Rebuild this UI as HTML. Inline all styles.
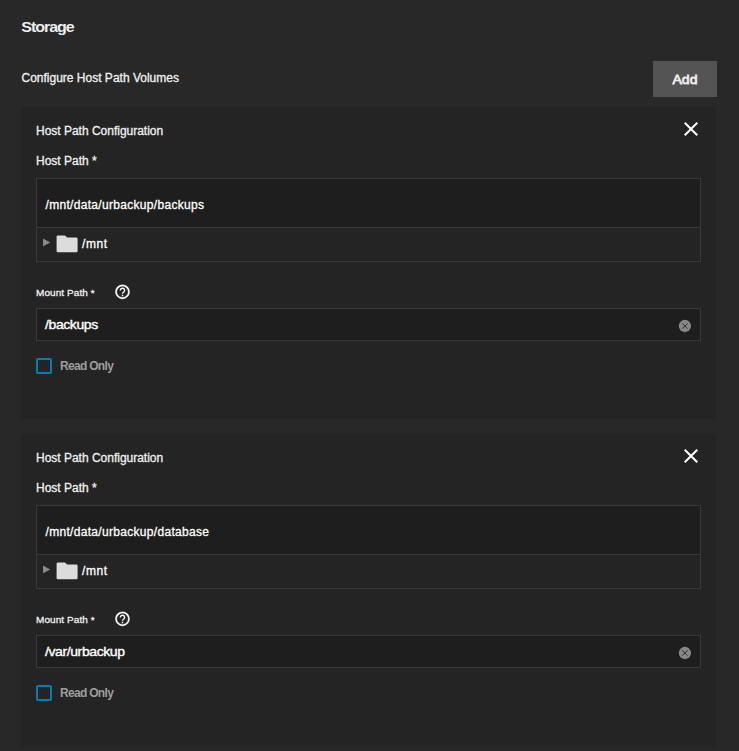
<!DOCTYPE html>
<html lang="en">
<head>
<meta charset="utf-8">
<title>Storage</title>
<style>
  html, body { margin: 0; padding: 0; }
  body {
    width: 739px; height: 751px; overflow: hidden; position: relative;
    background: #282828; color: #ffffff;
    font-family: "Liberation Sans", Arial, sans-serif;
    font-size: 13px;
  }
  .abs { position: absolute; white-space: nowrap; line-height: 1; }
  h2.section-title {
    margin: 0; left: 21px; top: 19px; font-size: 16px; font-weight: 700;
    letter-spacing: -1.02px; color: #ededed; transform: translate(0.3px, 0.3px) scaleY(0.965); transform-origin: 0 78%;
  }
  .list-label { left: 21.5px; top: 72px; font-size: 12px; letter-spacing: 0; color: #f0f0f0; -webkit-text-stroke: 0.3px #f0f0f0; }
  button.add {
    position: absolute; left: 653px; top: 61px; width: 64px; height: 36px;
    border: 0; border-radius: 0; background: #545454; color: #efefef; padding: 0;
    font-family: inherit; font-size: 14px; font-weight: 400; letter-spacing: 0;
    line-height: 36px; text-align: center; -webkit-text-stroke: 0.8px #efefef;
  }
  button.add span { display: inline-block; transform: translateY(0px) scale(1, 0.97); }
  .card {
    position: absolute; left: 21px; width: 695px; height: 312px; background: #242424;
  }
  .card .title { left: 15px; top: 18px; font-size: 12px; letter-spacing: -0.01px; color: #f0f0f0; -webkit-text-stroke: 0.3px #f0f0f0; }
  .card .close { position: absolute; left: 658px; top: 10px; width: 24px; height: 24px; }
  .card .lbl-host { left: 15px; top: 48px; font-size: 12px; letter-spacing: 0; color: #f0f0f0; -webkit-text-stroke: 0.3px #f0f0f0; }
  .explorer {
    position: absolute; left: 15px; top: 71px; width: 663px; height: 82px;
    border: 1px solid #393939;
  }
  .explorer .inp {
    position: absolute; left: 0; top: 0; right: 0; height: 48px; background: #1e1e1e;
    border-bottom: 1px solid #393939;
  }
  .explorer .inp span { left: 8.5px; top: 20px; font-size: 12px; letter-spacing: 0.31px; -webkit-text-stroke: 0.3px #fff; }
  .explorer .tree { position: absolute; left: 0; top: 49px; right: 0; height: 33px; }
  .tree svg { position: absolute; left: 0; top: 0; width: 48px; height: 33px; }
  .tree span { left: 45px; top: 10px; font-size: 12px; letter-spacing: 0.6px; -webkit-text-stroke: 0.3px #fff; }
  .lbl-mount { left: 15px; top: 181px; font-size: 10px; color: #f0f0f0; -webkit-text-stroke: 0.3px #f0f0f0; letter-spacing: 0.08px; transform: scaleY(0.985); transform-origin: 0 80%; }
  .help { position: absolute; left: 93px; top: 176px; width: 18px; height: 18px; }
  .field {
    position: absolute; left: 15px; top: 201px; width: 663px; height: 31px;
    border: 1px solid #393939; background: #1e1e1e;
  }
  .field span { left: 8px; top: 8px; font-size: 14px; letter-spacing: -0.4px; -webkit-text-stroke: 0.4px #fff; transform: scaleY(0.94); transform-origin: 0 83%; }
  .field svg { position: absolute; left: 639px; top: 8px; width: 18px; height: 18px; }
  .cb { position: absolute; left: 15px; top: 251px; width: 12px; height: 12px; border: 2px solid #077eb2; border-radius: 2px; }
  .cb-label { left: 39px; top: 253px; font-size: 12px; font-weight: 700; letter-spacing: -0.69px; color: #9e9e9e; }
</style>
</head>
<body>
  <h2 class="abs section-title">Storage</h2>
  <div class="abs list-label">Configure Host Path Volumes</div>
  <button class="add" type="button"><span>Add</span></button>

  <section class="card" style="top:107px">
    <div class="abs title">Host Path Configuration</div>
    <svg class="close" viewBox="0 0 24 24"><path fill="#ffffff" d="M19 6.41L17.59 5 12 10.59 6.41 5 5 6.41 10.59 12 5 17.59 6.41 19 12 13.41 17.59 19 19 17.59 13.41 12z"/></svg>
    <label class="abs lbl-host">Host Path *</label>
    <div class="explorer">
      <div class="inp"><span class="abs">/mnt/data/urbackup/backups</span></div>
      <div class="tree">
        <svg class="tree-icons" viewBox="0 0 48 33"><polygon fill="#8a8a8a" points="6,10.6 13.300,14.400 6,18.200"/><g transform="translate(17.5 3.25) scale(1.05)"><path fill="#dcdcdc" d="M10 4H3.300A1.300 1.300 0 0 0 2 5.300V18.700A1.300 1.300 0 0 0 3.300 20H20.700A1.300 1.300 0 0 0 22 18.700V7.300A1.300 1.300 0 0 0 20.700 6H12L10 4Z"/></g></svg>
        <span class="abs">/mnt</span>
      </div>
    </div>
    <label class="abs lbl-mount">Mount Path *</label>
    <svg class="help" viewBox="0 0 18 18"><g transform="translate(0 0.3) scale(0.7083)"><path fill="#ffffff" stroke="#ffffff" stroke-width="0.4" d="M12 2C6.480 2 2 6.480 2 12s4.480 10 10 10 10-4.480 10-10S17.520 2 12 2zm0 18c-4.410 0-8-3.590-8-8s3.590-8 8-8 8 3.590 8 8-3.590 8-8 8z"/><path fill="#ffffff" d="M11 18.300h2v-2h-2v2zM12 6c-2.210 0-4 1.790-4 4h2c0-1.100.9-2 2-2s2 .9 2 2c0 2-3 1.750-3 4.700h2c0-1.950 3-2.200 3-4.700 0-2.210-1.790-4-4-4z"/></g></svg>
    <div class="field">
      <span class="abs">/backups</span>
      <svg viewBox="0 0 18 18"><g transform="translate(1.52 1.6) scale(0.615)"><circle cx="12" cy="12" r="10" fill="#878787"/><path d="M7.700 7.700l8.600 8.600M16.300 7.700l-8.600 8.600" stroke="#2a2a2a" stroke-width="1.500" fill="none"/></g></svg>
    </div>
    <i class="cb"></i>
    <label class="abs cb-label">Read Only</label>
  </section>

  <section class="card" style="top:434px">
    <div class="abs title">Host Path Configuration</div>
    <svg class="close" viewBox="0 0 24 24"><path fill="#ffffff" d="M19 6.41L17.59 5 12 10.59 6.41 5 5 6.41 10.59 12 5 17.59 6.41 19 12 13.41 17.59 19 19 17.59 13.41 12z"/></svg>
    <label class="abs lbl-host">Host Path *</label>
    <div class="explorer">
      <div class="inp"><span class="abs">/mnt/data/urbackup/database</span></div>
      <div class="tree">
        <svg class="tree-icons" viewBox="0 0 48 33"><polygon fill="#8a8a8a" points="6,10.6 13.300,14.400 6,18.200"/><g transform="translate(17.5 3.25) scale(1.05)"><path fill="#dcdcdc" d="M10 4H3.300A1.300 1.300 0 0 0 2 5.300V18.700A1.300 1.300 0 0 0 3.300 20H20.700A1.300 1.300 0 0 0 22 18.700V7.300A1.300 1.300 0 0 0 20.700 6H12L10 4Z"/></g></svg>
        <span class="abs">/mnt</span>
      </div>
    </div>
    <label class="abs lbl-mount">Mount Path *</label>
    <svg class="help" viewBox="0 0 18 18"><g transform="translate(0 0.3) scale(0.7083)"><path fill="#ffffff" stroke="#ffffff" stroke-width="0.4" d="M12 2C6.480 2 2 6.480 2 12s4.480 10 10 10 10-4.480 10-10S17.520 2 12 2zm0 18c-4.410 0-8-3.590-8-8s3.590-8 8-8 8 3.590 8 8-3.590 8-8 8z"/><path fill="#ffffff" d="M11 18.300h2v-2h-2v2zM12 6c-2.210 0-4 1.790-4 4h2c0-1.100.9-2 2-2s2 .9 2 2c0 2-3 1.750-3 4.700h2c0-1.950 3-2.200 3-4.700 0-2.210-1.790-4-4-4z"/></g></svg>
    <div class="field">
      <span class="abs">/var/urbackup</span>
      <svg viewBox="0 0 18 18"><g transform="translate(1.52 1.6) scale(0.615)"><circle cx="12" cy="12" r="10" fill="#878787"/><path d="M7.700 7.700l8.600 8.600M16.300 7.700l-8.600 8.600" stroke="#2a2a2a" stroke-width="1.500" fill="none"/></g></svg>
    </div>
    <i class="cb"></i>
    <label class="abs cb-label">Read Only</label>
  </section>
</body>
</html>
